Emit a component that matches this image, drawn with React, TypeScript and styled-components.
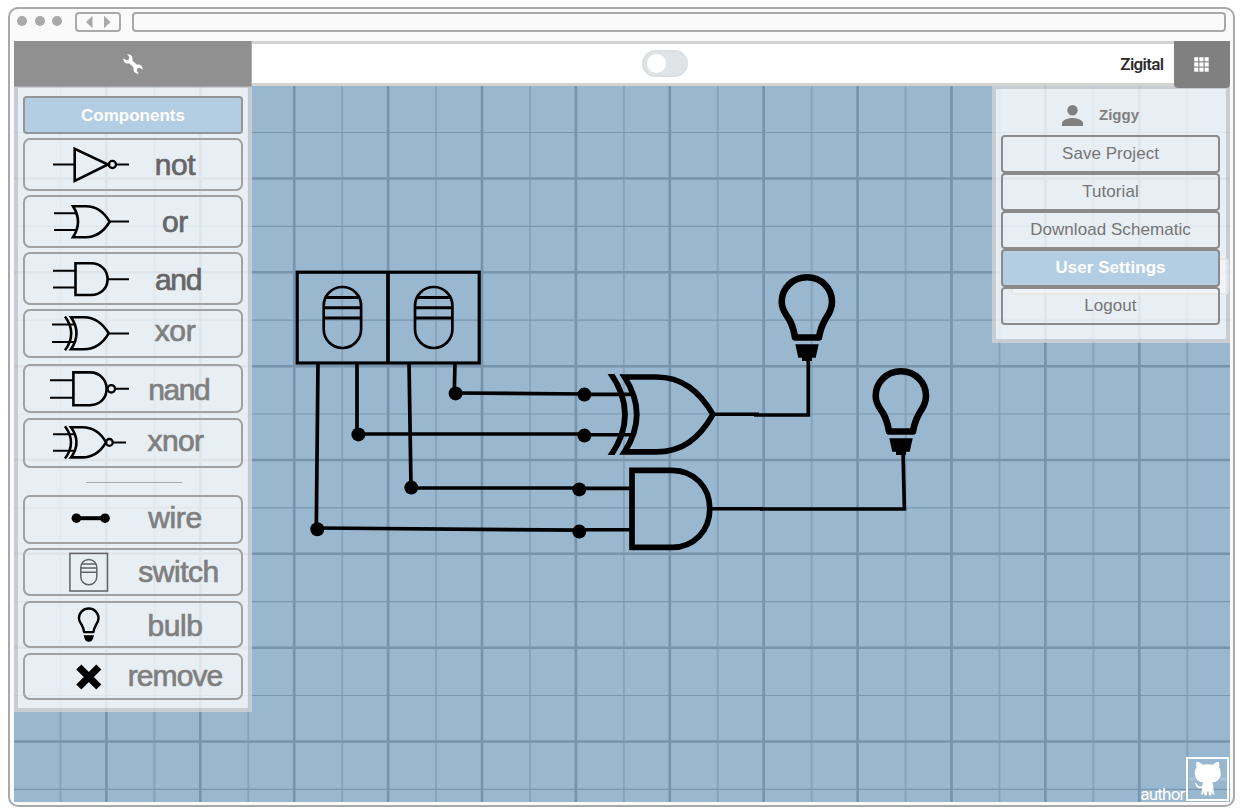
import React from 'react';
import styled, { createGlobalStyle } from 'styled-components';

const GlobalStyle = createGlobalStyle`
  * { box-sizing: border-box; }
  body { margin: 0; background: #fff; font-family: "Liberation Sans", Arial, sans-serif; }
  button { font-family: inherit; margin: 0; }
`;

const Page = styled.div`
  width: 1240px;
  height: 812px;
  padding: 7px 5px 5px 8px;
  overflow: hidden;
`;

const BrowserFrame = styled.div`
  width: 1227px;
  height: 800px;
  border: 2px solid #a9a9a9;
  border-radius: 10px;
  background: #fafafa;
  padding: 0 3px 3px 4px;
`;

const BrowserBar = styled.div`
  display: flex;
  align-items: flex-start;
  height: 32px;
  padding: 3px 4px 0 3px;
`;

const WindowDots = styled.div`
  display: flex;
  gap: 7.6px;
  padding-top: 4.3px;
  width: 57.5px;
`;

const Dot = styled.span`
  flex: none;
  width: 10px;
  height: 10px;
  border-radius: 50%;
  background: #a9a9a9;
`;

const HistoryButtons = styled.div`
  display: flex;
  align-items: center;
  justify-content: center;
  width: 46px;
  height: 20px;
  border: 2px solid #a9a9a9;
  border-radius: 4px;
`;

const AddressField = styled.div`
  flex: 1;
  height: 20px;
  margin-left: 11px;
  border: 2px solid #a9a9a9;
  border-radius: 4px;
`;

const AppWindow = styled.div`
  width: 1216px;
  height: 761px;
`;

const TopBar = styled.header`
  position: relative;
  z-index: 2;
  display: flex;
  height: 45px;
`;

const ToolsButton = styled.button`
  width: 238px;
  height: 46px;
  border: 0;
  border-right: 1px solid #b0b0b0;
  border-bottom: 1px solid #a8a8a8;
  background: #909090;
  display: flex;
  align-items: center;
  justify-content: center;
  padding: 0;
`;

const TitleStrip = styled.div`
  flex: 1;
  display: flex;
  align-items: center;
  background: #fff;
  border: solid #d3d3d3;
  border-width: 3px 0;
`;

const Toggle = styled.span`
  display: flex;
  align-items: center;
  width: 46px;
  height: 27px;
  margin-left: 390.4px;
  padding-left: 3px;
  border: 2px solid #dcdfe1;
  border-radius: 14px;
  background: #e0e4e7;
`;

const Knob = styled.span`
  width: 19px;
  height: 19px;
  border-radius: 50%;
  background: #fff;
`;

const Brand = styled.span`
  margin: 1px 10.5px 0 auto;
  font: 500 17px "Roboto", sans-serif;
  letter-spacing: -0.65px;
  color: #2a2a2a;
  -webkit-text-stroke: 0.1px #2a2a2a;
`;

const AppsButton = styled.button`
  width: 56px;
  height: 47px;
  border: 0;
  border-radius: 0 0 4px 4px;
  background: #808080;
  display: flex;
  align-items: center;
  justify-content: center;
  padding: 0 1px 1px 0;
`;

const Workspace = styled.main`
  position: relative;
  height: 716px;
  display: flex;
  justify-content: space-between;
  align-items: flex-start;
`;

const Board = styled.svg`
  position: absolute;
  inset: 0;
  display: block;
  background: #9ab7d0;
`;

const Panel = styled.aside<{ $height: number }>`
  position: relative;
  width: 238px;
  height: ${(p) => p.$height}px;
  border: 4px solid rgba(211, 211, 211, 0.78);
  border-top-width: 3px;
  background: rgba(255, 255, 255, 0.76);
  background-clip: padding-box;
  padding: 7px 5px 0;
`;

const ToolPanel = styled(Panel)`
  border-top-width: 2px;
  padding-top: 8px;
`;

const PanelHeading = styled.h2`
  margin: 0;
  height: 38px;
  width: 220px;
  display: flex;
  align-items: center;
  justify-content: center;
  padding-top: 1.5px;
  border: 2px solid #949596;
  border-radius: 4px;
  background: #b3cde2;
  color: #fff;
  font-size: 17px;
`;

const ToolRow = styled.button<{ $height: number; $gap: number }>`
  display: flex;
  align-items: stretch;
  width: 220px;
  height: ${(p) => p.$height}px;
  margin-top: ${(p) => p.$gap}px;
  padding: 0 13px 0 23px;
  border: 2px solid #a2a1a1;
  border-radius: 7px;
  background: transparent;
`;

const ToolIcon = styled.svg`
  flex: none;
  overflow: visible;
  fill: none;
  stroke: #000;
  stroke-width: 2;
`;

const ToolLabel = styled.span<{ $dark?: boolean; $drop: number; $tracking: number; $indent: number }>`
  flex: 1;
  text-align: center;
  white-space: nowrap;
  font-size: 30px;
  line-height: 34px;
  padding-top: ${(p) => p.$drop}px;
  padding-left: ${(p) => p.$indent}px;
  letter-spacing: ${(p) => p.$tracking}px;
  color: ${(p) => (p.$dark ? '#666' : '#7f7f7f')};
  -webkit-text-stroke: 0.7px currentColor;
`;

const Divider = styled.hr`
  width: 96px;
  height: 1px;
  margin: 14px 0 0 63px;
  border: 0;
  background: #a9a9a9;
`;

const UserLine = styled.div`
  position: relative;
  display: flex;
  align-items: center;
  height: 39px;
  padding-left: 60.5px;
  gap: 16.5px;
  color: #808080;
  font-size: 15px;
  font-weight: bold;
`;

const UserName = styled.span`
  padding-bottom: 2px;
`;

const MenuButton = styled.button<{ $active?: boolean }>`
  position: relative;
  display: block;
  width: 219px;
  height: 38px;
  padding: 0;
  border: 2px solid #8a8a8a;
  border-radius: 4px;
  background: ${(p) => (p.$active ? '#b3cde2' : 'transparent')};
  color: ${(p) => (p.$active ? '#fff' : '#757575')};
  font-size: 17px;
  font-weight: ${(p) => (p.$active ? 'bold' : 'normal')};
  letter-spacing: 0.05px;
`;

const FadedNotice = styled.div`
  position: absolute;
  right: -3px;
  top: 169px;
  width: 218px;
  height: 37px;
  border: 2px solid rgba(228, 222, 214, 0.6);
  border-radius: 4px;
  background: rgba(245, 248, 255, 0.55);
`;

const Author = styled.a`
  position: absolute;
  right: 1px;
  bottom: 1px;
  display: flex;
  align-items: flex-end;
  color: #fff;
  font: 17px/18px "Roboto", sans-serif;
  letter-spacing: -0.8px;
`;

const AuthorName = styled.span`
  margin-bottom: -2px;
`;

const AuthorBadge = styled.span`
  width: 43px;
  height: 44px;
  margin-left: 1.5px;
  border: 2px solid #fff;
  display: flex;
`;

const WIRE = 3.7;

const Switch = ({ x }: { x: number }) => (
  <g strokeWidth="2.7">
    <rect x={x - 18.7} y="287" width="37.4" height="61" rx="18.7" />
    <path strokeWidth="3" d={`M${x - 16} 297.5h32M${x - 18.5} 307.7h37M${x - 18.5} 318h37`} />
  </g>
);

const BULB_GLASS =
  'M807 277.3C793 277.3 781.7 288 781.7 302C781.7 310 786 314.5 789 319C793 326 794 331 795 337.5H819C820 331 821.5 326 825.5 319C828.5 314.5 832 310 832 302C832 288 821 277.3 807 277.3Z';

const Bulb = ({ dx = 0, dy = 0 }: { dx?: number; dy?: number }) => (
  <g transform={`translate(${dx} ${dy})`}>
    <path strokeWidth="6.6" strokeLinejoin="round" d={BULB_GLASS} />
    <path fill="#000" stroke="none" d="M795.3 344.3H818.7L815.7 357.8H812V361H802V357.8H798.3Z" />
  </g>
);

const indexes = (n: number) => Array.from({ length: n }, (_, i) => i);

const Schematic = () => (
  <Board width="1216" height="716" viewBox="14 86 1216 716" fill="none" stroke="#000">
    <g stroke="#7894ac">
      {indexes(13).map((i) => (
        <g key={i}>
          <path strokeWidth="1.8" opacity="0.6" d={`M${60.5 + 93.9 * i} 86V802`} />
          <path strokeWidth="2.7" d={`M${106.4 + 93.9 * i} 86V802`} />
        </g>
      ))}
      {indexes(8).map((i) => (
        <g key={i}>
          <path strokeWidth="1.2" opacity="0.9" d={`M14 ${132.5 + 93.83 * i}H1230`} />
          <path strokeWidth="2.5" d={`M14 ${178.5 + 93.83 * i}H1230`} />
        </g>
      ))}
    </g>
    <rect x="297.2" y="272.2" width="182" height="90.8" strokeWidth="3.2" />
    <path strokeWidth="3.7" d="M388 271V364" />
    <Switch x={342.4} />
    <Switch x={433.7} />
    <g strokeWidth={WIRE}>
      <path d="M318 362L316.3 529M357 362V434M409 362L411 487M455 362L454.3 393" />
      <path d="M455 393L584 394M358 434H584M411 488H579M317 528L579 530.2" />
      <path d="M754 415H808.3V358M760 509H904.4L903 450" />
    </g>
    <g fill="#000" stroke="none">
      {[[317.3, 529.3], [358.4, 434.4], [411.3, 487.6], [455.6, 393.4], [584.4, 394.6], [584.4, 435.6], [579.3, 489.4], [579.3, 531.6]].map(
        ([cx, cy]) => <circle key={`${cx}-${cy}`} cx={cx} cy={cy} r="7" />,
      )}
    </g>
    <g strokeWidth="3.6">
      <path d="M584 394.4H632M584 434.8H632M714 414.3H759M579 488.4H630M579 529.8H630M711 508.8H763" />
    </g>
    <clipPath id="gate-bounds"><rect x="600" y="374" width="130" height="81" /></clipPath>
    <g clipPath="url(#gate-bounds)" strokeWidth="5.7">
      <path d="M609 371Q641 414.5 609 458" />
      <path d="M624.5 377H656C682 377 699 391 713 414.4C699 439 682 451.9 656 451.9H624.5Q649 414.5 624.5 377Z" />
    </g>
    <path strokeWidth="5.7" d="M632 470.3H672C694 470.3 709.8 487 709.8 508.8C709.8 530.5 694 547.4 672 547.4H632Z" />
    <Bulb />
    <Bulb dx={94} dy={94} />
  </Board>
);

type Tool = {
  name: string;
  top: number;
  height: number;
  gap: number;
  drop: number;
  tracking?: number;
  indent?: number;
  dark?: boolean;
  art: React.ReactNode;
};

const gates: Tool[] = [
  {
    name: 'not', top: 138, height: 53, gap: 4, drop: 8, dark: true,
    art: (
      <>
        <path d="M53 164.5H74M116 164.5H129" />
        <path strokeWidth="2.6" d="M74.7 148.8V181L108 164.5Z" />
        <circle strokeWidth="2.3" cx="112.4" cy="164.5" r="3.6" />
      </>
    ),
  },
  {
    name: 'or', top: 195, height: 53, gap: 4, drop: 7.7, dark: true,
    art: (
      <>
        <path d="M54 213.3H77M54 230H77M110 221.6H129" />
        <path strokeWidth="2.6" d="M73 206.3H86C97 206.3 104 212 109.7 221.8C104 231 97 237.3 86 237.3H73Q83 221.8 73 206.3Z" />
      </>
    ),
  },
  {
    name: 'and', top: 252, height: 53, gap: 4, drop: 9, dark: true, tracking: -1.3, indent: 6,
    art: (
      <>
        <path d="M53 270.7H75M53 287.6H75M108 279.2H129" />
        <path strokeWidth="2.6" d="M75.5 263.3H91C101 263.3 107.6 270.3 107.6 279.2C107.6 288 101 295 91 295H75.5Z" />
      </>
    ),
  },
  {
    name: 'xor', top: 309, height: 49, gap: 4, drop: 3,
    art: (
      <>
        <path d="M52 324.6H74M52 342H74M109 333.4H129" />
        <path strokeWidth="2.5" d="M65 316.5Q77.5 333.4 65 350.3" />
        <path strokeWidth="2.6" d="M71 317.3H84C96 317.3 103 324 108.7 333.3C103 343 96 349.2 84 349.2H71Q82 333.3 71 317.3Z" />
      </>
    ),
  },
  {
    name: 'nand', top: 364, height: 49, gap: 6, drop: 7, tracking: -1.4, indent: 7.5,
    art: (
      <>
        <path d="M50 380.2H73M50 397.7H73M116 388.8H129" />
        <path strokeWidth="2.6" d="M73.4 372.4H90C100 372.4 106.6 380 106.6 388.8C106.6 398 100 405.2 90 405.2H73.4Z" />
        <circle strokeWidth="2.3" cx="111.3" cy="388.8" r="3.7" />
      </>
    ),
  },
  {
    name: 'xnor', top: 418, height: 50, gap: 5, drop: 4, tracking: -0.6, indent: 1,
    art: (
      <>
        <path d="M53 434.3H74M53 450.7H74M113 442.4H126" />
        <path strokeWidth="2.5" d="M65 426.2Q77 442.4 65 458.6" />
        <path strokeWidth="2.6" d="M71 427.2H82C94 427.2 101 433 106 442.4C101 451 94 457.4 82 457.4H71Q82 442.4 71 427.2Z" />
        <circle strokeWidth="2.3" cx="109.4" cy="442.4" r="3.4" />
      </>
    ),
  },
];

const parts: Tool[] = [
  {
    name: 'wire', top: 495, height: 49, gap: 12, drop: 4,
    art: (
      <>
        <path strokeWidth="4" d="M76 518.2H105" />
        <circle cx="76.4" cy="518.2" r="4.8" fill="#000" stroke="none" />
        <circle cx="105" cy="518.2" r="4.8" fill="#000" stroke="none" />
      </>
    ),
  },
  {
    name: 'switch', top: 548, height: 48, gap: 4, drop: 5, tracking: -0.5, indent: 7,
    art: (
      <g stroke="#606264" strokeWidth="1.5">
        <rect x="69.9" y="553.4" width="37.6" height="37.6" />
        <rect x="80.8" y="559.5" width="16" height="25.3" rx="8" />
        <path d="M82 564H96M81 568H97M81 572.2H97" />
      </g>
    ),
  },
  {
    name: 'bulb', top: 601, height: 47, gap: 5, drop: 6,
    art: (
      <>
        <path transform="translate(-225.4 499.8) scale(0.3893 0.392)" strokeWidth="6.2" strokeLinejoin="round" d={BULB_GLASS} />
        <path fill="#000" stroke="none" d="M83.6 635.3H94L93 638.5Q92 641.8 88.8 641.8Q85.6 641.8 84.6 638.5Z" />
      </>
    ),
  },
  {
    name: 'remove', top: 653, height: 47, gap: 5, drop: 4, tracking: -0.95,
    art: <path strokeWidth="7.2" d="M78.8 667L98.8 687M98.8 667L78.8 687" />,
  },
];

const ToolButton = ({ tool }: { tool: Tool }) => (
  <ToolRow $height={tool.height} $gap={tool.gap}>
    <ToolIcon width="74" height={tool.height - 4} viewBox={`48 ${tool.top + 2} 74 ${tool.height - 4}`}>
      {tool.art}
    </ToolIcon>
    <ToolLabel $dark={tool.dark} $drop={tool.drop} $tracking={tool.tracking ?? -0.4} $indent={tool.indent ?? 0}>
      {tool.name}
    </ToolLabel>
  </ToolRow>
);

const Wrench = () => (
  <svg width="22" height="22" viewBox="0 0 22 22" fill="#fff">
    <path d="M5.2 1.4L7.4 4L6.8 6.6L4.2 7.3L1.4 5.2C0.9 9 4 11.3 7.4 10.4L11.6 14.6C10.7 18 13 21.1 16.8 20.6L14.7 18L15.3 15.4L17.9 14.7L20.6 16.8C21.1 13 18 10.7 14.6 11.6L10.4 7.4C11.3 4 9 0.9 5.2 1.4Z" />
  </svg>
);

const AppsGlyph = () => (
  <svg width="15" height="15" viewBox="0 0 15 15" fill="#fff">
    {indexes(9).map((i) => (
      <rect key={i} x={(i % 3) * 5.2 + 0.2} y={Math.floor(i / 3) * 5.2 + 0.2} width="4.1" height="4.1" />
    ))}
  </svg>
);

const Octocat = () => (
  <svg width="39" height="40" viewBox="-0.5 0 39 40" fill="#fff">
    <path d="M8.1 2.7C7.5 4.9 7.6 7 8.1 8.4C6.5 10.4 6 12.6 6.3 15.2C6.8 20.4 10 22.9 15 23.6C14.2 24.6 13.8 25.7 13.7 27C11.7 27.8 10.1 27.5 9 25.9C8.2 24.6 7.2 23.7 5.7 23.8C6.6 24.5 7 25.4 7.5 26.7C8.5 28.9 10.8 29.8 13.5 29.3C13.5 32 13.2 33.6 12.1 35.6H14.5L15.6 32.5L15.9 36.3H18.2L18.7 32.5H20L20.5 36.3H22.8L23.1 32.5L24.2 35.6H26.2C25 33.2 24.9 30.6 24.8 27.6C24.7 25.8 24.4 24.6 23.5 23.6C28.7 22.9 31.8 20.2 32.2 15.2C32.4 12.6 32 10.4 30.5 8.4C31 6.8 31 4.8 30.4 2.7C28 3 25.8 4.4 24.2 5.8C21 5.1 17.6 5.1 14.4 5.8C12.7 4.4 10.6 3 8.1 2.7Z" />
    <path d="M1 19.5L6.5 19.1M1.7 21.5L6.8 20.6M37.5 19.5L32 19.1M36.8 21.5L31.7 20.6" stroke="#fff" strokeWidth="0.5" opacity="0.5" />
  </svg>
);

const menu = ['Save Project', 'Tutorial', 'Download Schematic', 'User Settings', 'Logout'];

export default function App() {
  return (
    <Page>
      <GlobalStyle />
      <BrowserFrame>
        <BrowserBar>
          <WindowDots><Dot /><Dot /><Dot /></WindowDots>
          <HistoryButtons>
            <svg width="26" height="14" viewBox="0 0 26 14" fill="#a9a9a9">
              <path d="M7.5 0.8V13.2L1 7ZM19 0.8V13.2L25.5 7Z" />
            </svg>
          </HistoryButtons>
          <AddressField />
        </BrowserBar>
        <AppWindow>
          <TopBar>
            <ToolsButton><Wrench /></ToolsButton>
            <TitleStrip>
              <Toggle><Knob /></Toggle>
              <Brand>Zigital</Brand>
            </TitleStrip>
            <AppsButton><AppsGlyph /></AppsButton>
          </TopBar>
          <Workspace>
            <Schematic />
            <ToolPanel $height={626}>
              <PanelHeading>Components</PanelHeading>
              {gates.map((tool) => <ToolButton key={tool.name} tool={tool} />)}
              <Divider />
              {parts.map((tool) => <ToolButton key={tool.name} tool={tool} />)}
            </ToolPanel>
            <Panel $height={257}>
              <FadedNotice />
              <UserLine>
                <svg width="21" height="21" viewBox="0 0 21 21" fill="#808080">
                  <circle cx="10.5" cy="5.2" r="5.2" />
                  <path d="M0 21V18.3C0 14.8 7 13 10.5 13S21 14.8 21 18.3V21Z" />
                </svg>
                <UserName>Ziggy</UserName>
              </UserLine>
              {menu.map((label) => (
                <MenuButton key={label} $active={label === 'User Settings'}>{label}</MenuButton>
              ))}
            </Panel>
            <Author>
              <AuthorName>author</AuthorName>
              <AuthorBadge><Octocat /></AuthorBadge>
            </Author>
          </Workspace>
        </AppWindow>
      </BrowserFrame>
    </Page>
  );
}
